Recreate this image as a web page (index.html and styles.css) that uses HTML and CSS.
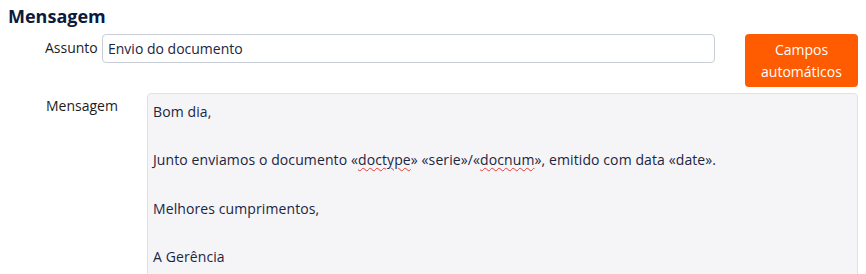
FILE: index.html
```html
<!DOCTYPE html>
<html lang="pt">
<head>
    <meta charset="UTF-8">
    <meta name="viewport" content="width=device-width, initial-scale=1.0">
    <title>Mensagem</title>
    <link rel="stylesheet" href="styles.css">
</head>
<body>

    <h2 class="section-title">Mensagem</h2>

    <div class="form-row subject-row">
        <label for="subject" class="field-label">Assunto</label>
        <input type="text" id="subject" class="subject-input" value="Envio do documento">
        <button class="fields-btn">Campos<br>automáticos</button>
    </div>

    <div class="form-row message-row">
        <label class="field-label message-label">Mensagem</label>
        <div class="editor" contenteditable="true">
            <p>Bom dia,</p>
            <p>&nbsp;</p>
            <p>Junto enviamos o documento «<span class="typo">doctype</span>» «serie»/«<span class="typo">docnum</span>», emitido com data «date».</p>
            <p>&nbsp;</p>
            <p>Melhores cumprimentos,</p>
            <p>&nbsp;</p>
            <p>A Gerência</p>
        </div>
    </div>

</body>
</html>
```

FILE: styles.css
```css
body { font-family: 'Open Sans', 'Noto Sans', sans-serif; font-size: 14px; margin: 0; padding: 0 8px; background: #fff; color: #1c1c1c; overflow: hidden; }
.section-title { font-size: 18px; font-weight: 700; color: #0c1a3c; margin: 4px 0 6px; line-height: 24px; }
.form-row { display: flex; align-items: flex-start; }
.field-label { display: block; }
.subject-row { padding-left: 37px; }
.subject-row .field-label { width: 57px; line-height: 24px; padding-top: 2px; }
.subject-input { width: 613px; height: 29px; box-sizing: border-box; border: 1px solid #c9cdd6; border-radius: 4px; padding: 0 5px; font-family: inherit; font-size: 14px; color: #1c2541; background: #fff; outline: none; }
.fields-btn { width: 113px; height: 53px; margin-left: 30px; background-color: #ff5b00; color: #fff; border: none; border-radius: 4px; font-family: inherit; font-size: 14px; line-height: 22px; padding: 0; cursor: pointer; }
.message-row { padding-left: 38px; margin-top: 6px; }
.message-label { width: 101px; line-height: 24px; padding-top: 1px; }
.editor { flex: 1; height: 200px; box-sizing: border-box; background: #f5f5f8; border: 1px solid #e1e2e8; border-radius: 4px; padding: 6px 5px; color: #1c2541; line-height: 24.2px; letter-spacing: 0.1px; outline: none; }
.editor p { margin: 0; }
.typo { text-decoration: underline wavy #e53935; text-decoration-thickness: 1px; text-underline-offset: 2px; }
```
